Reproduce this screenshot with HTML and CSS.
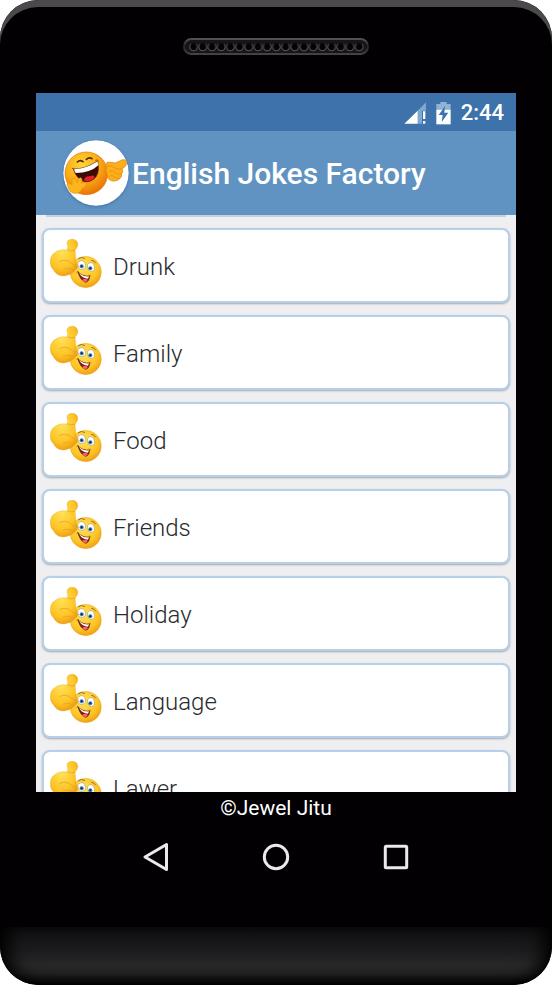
FILE: index.html
```html
<!DOCTYPE html>
<html lang="en">
<head>
<meta charset="utf-8">
<meta name="viewport" content="width=device-width, initial-scale=1">
<title>English Jokes Factory</title>
<link rel="stylesheet" href="styles.css">
</head>
<body>
<svg class="defs" aria-hidden="true">
  <defs>
    <radialGradient id="skin" cx="0.42" cy="0.32" r="0.75">
      <stop offset="0" stop-color="#ffe25a"/>
      <stop offset="0.65" stop-color="#fdc425"/>
      <stop offset="1" stop-color="#ea950f"/>
    </radialGradient>
    <radialGradient id="laughSkin" cx="0.4" cy="0.3" r="0.75">
      <stop offset="0" stop-color="#ffd63c"/>
      <stop offset="0.55" stop-color="#fba914"/>
      <stop offset="1" stop-color="#e86c04"/>
    </radialGradient>
  </defs>
  <symbol id="thumb" viewBox="12 9 156 162">
    <circle cx="119" cy="108" r="47" fill="url(#skin)" stroke="#e79a1a" stroke-width="1"/>
    <path d="M62 42 Q67 36 64 28 C60 16 68 10 78 10 C90 10 97 18 95 29 Q93 37 87 42 C89 56 88 72 94 88 Q98 96 88 103 Q76 118 58 119 C42 122 28 114 23 102 C9 90 10 66 21 54 Q38 38 62 42Z" fill="url(#skin)" stroke="#e3a42e" stroke-width="1"/>
    <path d="M42 76 Q60 68 74 80 Q82 88 92 88 M52 99 Q66 92 80 101 M66 42 Q76 48 87 43" fill="none" stroke="#e5a326" stroke-width="2.500" stroke-linecap="round"/>
    <ellipse cx="107" cy="87" rx="11" ry="13" fill="#fff" stroke="#9a9384" stroke-width="1.500" transform="rotate(-15 107 87)"/>
    <ellipse cx="135" cy="93" rx="10" ry="13" fill="#fff" stroke="#9a9384" stroke-width="1.500" transform="rotate(-15 135 93)"/>
    <circle cx="107" cy="91" r="6" fill="#3b82bb"/>
    <circle cx="133" cy="97" r="6" fill="#3b82bb"/>
    <circle cx="107" cy="91" r="3" fill="#102338"/>
    <circle cx="133" cy="97" r="3" fill="#102338"/>
    <path d="M97 68 Q105 61 116 67 M137 73 Q145 73 149 81" fill="none" stroke="#8a5c16" stroke-width="2.500" stroke-linecap="round"/>
    <path d="M95 107 Q111 123 131 120 C130 133 124 142 114 137 Q103 131 95 107Z" fill="#861a18" stroke="#572008" stroke-width="2"/>
    <path d="M99 112 Q113 123 129 121 L126 128 Q110 128 99 112Z" fill="#fff"/>
    <ellipse cx="117" cy="133" rx="8" ry="5" fill="#f36464"/>
    <path d="M91 110 Q93 105 98 106 M127 118 Q134 115 135 121" fill="none" stroke="#a45d0a" stroke-width="2"/>
  </symbol>
</svg>
<div class="phone">
  <div class="top-bezel">
    <svg class="speaker" viewBox="0 0 186 17" aria-hidden="true">
      <defs>
        <linearGradient id="rim" x2="0" y2="1"><stop stop-color="#555255"/><stop offset="0.5" stop-color="#242224"/><stop offset="1" stop-color="#454345"/></linearGradient>
        <pattern id="holes" x="6" width="9.200" height="17" patternUnits="userSpaceOnUse">
          <circle cx="4.600" cy="9" r="3.800" fill="#050405"/>
          <path d="M2 6 A3.900 3.900 0 1 0 7.200 6" fill="none" stroke="#555255" stroke-width="1"/>
        </pattern>
      </defs>
      <rect x="1" y="1" width="184" height="15" rx="7.500" fill="#171517" stroke="url(#rim)" stroke-width="2"/>
      <rect x="6" y="0" width="174.800" height="17" fill="url(#holes)"/>
    </svg>
  </div>
  <div class="screen">
    <div class="status">
      <svg class="signal" viewBox="37 32 66 66" role="img" aria-label="Mobile signal">
        <path d="M103 33V58H91V97H78V58Z" fill="#7fa8cf"/>
        <path d="M38 97 78 58V97Z" fill="#fff"/>
        <path d="M94 60H101V83H94ZM94 89H101V97H94Z" fill="#fff"/>
      </svg>
      <svg class="battery" viewBox="140 30 45 69" role="img" aria-label="Battery charging">
        <path d="M141 36H153V30H172V36H184V53H141Z" fill="#8fb2d5"/>
        <path d="M141 53H184V97H141Z" fill="#fff"/>
        <path d="M167 42 148 69H160L157 90 177 62H165Z" fill="#3d72aa"/>
      </svg>
      <span class="clock">2:44</span>
    </div>
    <header class="app-bar">
      <svg class="logo" viewBox="81 29 198 198" aria-hidden="true">
        <circle cx="180" cy="128" r="98" fill="#fff"/>
        <circle cx="151" cy="129" r="64" fill="url(#laughSkin)" stroke="#d97909" stroke-width="2"/>
        <path d="M124 95 Q132 87 141 94 M151 87 Q160 79 168 85" fill="none" stroke="#5c2804" stroke-width="5" stroke-linecap="round"/>
        <path d="M112 116 Q149 117 184 92 Q192 120 181 138 Q168 157 145 154 Q123 148 112 116Z" fill="#3b0b05" stroke="#5a1b04" stroke-width="2"/>
        <path d="M113 116 Q149 117 184 93 L187 105 Q163 128 119 128Z" fill="#fff"/>
        <path d="M143 150 Q149 135 162 138 Q174 132 176 141 Q164 158 143 150Z" fill="#e5202b"/>
        <path d="M108 115 Q112 111 115 118 M178 90 Q185 86 188 93" fill="none" stroke="#a74b05" stroke-width="3"/>
        <path d="M95 169 Q90 158 99 158 L108 163 108 147 Q114 139 119 148 L124 157 128 145 Q136 138 138 148 L136 159 144 156 Q153 154 150 163 Q147 171 139 174 Q133 189 117 189 Q101 188 95 169Z" fill="#fdb51c" stroke="#e88f10" stroke-width="2"/>
        <path d="M213 105 Q207 97 217 95 L238 98 260 88 Q274 87 272 99 Q270 110 258 115 Q264 124 256 131 Q259 139 252 144 Q245 154 230 152 Q214 149 214 135 Q206 119 213 105Z" fill="#fcae1b" stroke="#da7c08" stroke-width="2"/>
        <path d="M216 108 Q228 104 237 113 Q246 119 258 115 M220 122 Q231 117 238 128 Q247 133 256 131 M222 137 Q230 132 235 140 Q243 146 252 144" fill="none" stroke="#e48b10" stroke-width="2" stroke-linecap="round"/>
      </svg>
      <h1 class="title">English Jokes Factory</h1>
    </header>
    <main class="list-area">
      <ul class="list">
        <li><a class="card" href="#drunk"><svg class="face" aria-hidden="true"><use href="#thumb"/></svg><span class="label">Drunk</span></a></li>
        <li><a class="card" href="#family"><svg class="face" aria-hidden="true"><use href="#thumb"/></svg><span class="label">Family</span></a></li>
        <li><a class="card" href="#food"><svg class="face" aria-hidden="true"><use href="#thumb"/></svg><span class="label">Food</span></a></li>
        <li><a class="card" href="#friends"><svg class="face" aria-hidden="true"><use href="#thumb"/></svg><span class="label">Friends</span></a></li>
        <li><a class="card" href="#holiday"><svg class="face" aria-hidden="true"><use href="#thumb"/></svg><span class="label">Holiday</span></a></li>
        <li><a class="card" href="#language"><svg class="face" aria-hidden="true"><use href="#thumb"/></svg><span class="label">Language</span></a></li>
        <li><a class="card" href="#lawer"><svg class="face" aria-hidden="true"><use href="#thumb"/></svg><span class="label">Lawer</span></a></li>
      </ul>
    </main>
  </div>
  <footer class="credit">©Jewel Jitu</footer>
  <nav class="keys" aria-label="System">
    <button class="key" type="button" aria-label="Back"><svg viewBox="0 0 32 32"><path d="M26.500 3.500V28.500L5 16Z"/></svg></button>
    <button class="key" type="button" aria-label="Home"><svg viewBox="0 0 32 32"><circle cx="16" cy="16" r="11.700"/></svg></button>
    <button class="key" type="button" aria-label="Recent apps"><svg viewBox="0 0 32 32"><rect x="5.300" y="5.300" width="21.400" height="21.400" rx="1"/></svg></button>
  </nav>
  <div class="chin"></div>
</div>
</body>
</html>
```

FILE: styles.css
```css
* {
  box-sizing: border-box;
}

body {
  margin: 0;
  background: #fff;
  font-family: Roboto, "Liberation Sans", sans-serif;
}

.defs {
  position: absolute;
  width: 0;
  height: 0;
}

.phone {
  display: flex;
  flex-direction: column;
  height: 100vh;
  overflow: hidden;
  border-radius: 38px;
  background: #020003;
}

.top-bezel {
  flex: none;
  display: flex;
  justify-content: center;
  height: 93px;
  padding-top: 38px;
  border-radius: 38px 38px 0 0;
  box-shadow: inset 0 7px 0 #4b494b;
}

.speaker {
  width: 186px;
  height: 17px;
}

.screen {
  flex: 1;
  display: flex;
  flex-direction: column;
  min-height: 0;
  margin: 0 36px;
  background: #efeef0;
}

.status {
  flex: none;
  display: flex;
  align-items: center;
  justify-content: flex-end;
  gap: 10px;
  height: 38px;
  padding: 2px 12px 0 0;
  background: #3d72aa;
  color: #fff;
}

.signal {
  width: 22px;
  height: 22px;
}

.battery {
  width: 15px;
  height: 23px;
}

.clock {
  font-size: 22px;
  font-weight: 500;
  line-height: 24px;
}

.app-bar {
  flex: none;
  display: flex;
  align-items: center;
  gap: 3px;
  height: 84px;
  padding-left: 27px;
  background: #6193c2;
  color: #fff;
}

.logo {
  width: 66px;
  height: 66px;
  border-radius: 50%;
  box-shadow: 0 1px 3px #4579a8;
}

.title {
  margin: 0;
  padding-top: 2px;
  font-size: 30px;
  font-weight: 500;
  line-height: 36px;
}

.list-area {
  flex: 1;
  min-height: 0;
  overflow: hidden;
}

/* Lower edge of the row scrolled under the app bar */
.list-area::before {
  content: "";
  display: block;
  height: 2px;
  margin: 0 10px;
  background: #c6d0dc;
}

.list {
  display: grid;
  gap: 12px;
  margin: 0;
  padding: 11px 6px;
  list-style: none;
}

.card {
  display: flex;
  align-items: center;
  gap: 11px;
  height: 75px;
  padding-left: 6px;
  border: 2px solid #b6d0e9;
  border-radius: 8px;
  background: #fff;
  box-shadow: 0 1px 2px #a3a9b0;
  color: #292a2e;
  font-size: 24px;
  font-weight: 300;
  line-height: 28px;
  text-decoration: none;
}

.face {
  width: 52px;
  height: 54px;
}

.label {
  padding-top: 3px;
}

.credit {
  flex: none;
  height: 32px;
  color: #fff;
  font-size: 21px;
  line-height: 32px;
  text-align: center;
}

.keys {
  flex: none;
  display: flex;
  justify-content: center;
  height: 66px;
}

.key {
  display: flex;
  align-items: center;
  justify-content: center;
  width: 120px;
  padding: 0;
  border: 0;
  background: none;
}

.key svg {
  width: 32px;
  height: 32px;
  fill: none;
  stroke: #ebe9eb;
  stroke-width: 3;
  stroke-linejoin: round;
}

.chin {
  flex: none;
  height: 58px;
  margin-top: 37px;
  border-radius: 0 0 38px 38px;
  background: linear-gradient(#111012, #1b1a1c 40%, #282628 65%, #252425 78%, #0c0b0c 95%, #000);
  box-shadow: inset 14px 0 18px -6px #000, inset -14px 0 18px -6px #000;
}
```
